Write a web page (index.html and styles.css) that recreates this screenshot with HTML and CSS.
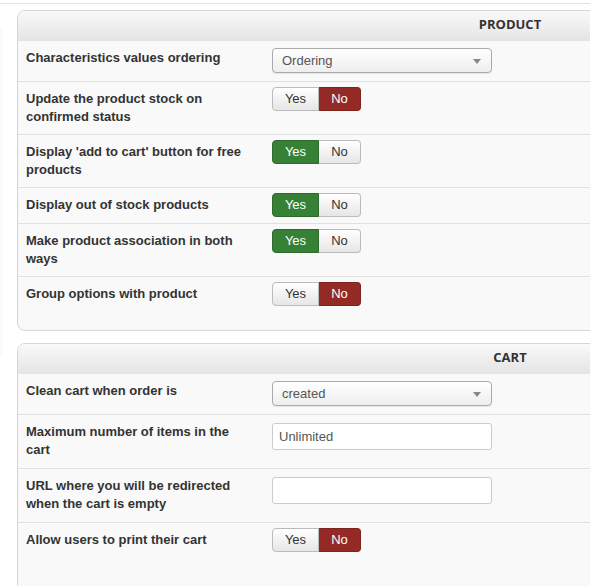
FILE: index.html
```html
<!DOCTYPE html>
<html lang="en">
<head>
    <meta charset="UTF-8">
    <meta name="viewport" content="width=device-width, initial-scale=1.0">
    <title>Shop configuration</title>
    <link rel="stylesheet" href="styles.css">
</head>
<body>
    <div class="topbar"></div>
    <div class="page">
        <div class="sidebar"></div>
        <div class="content">

            <!-- ---------------- Product settings ---------------- -->
            <div class="panel">
                <h3>PRODUCT</h3>
                <div class="row">
                    <div class="label">Characteristics values ordering</div>
                    <div class="field">
                        <div class="select">Ordering<span class="caret"></span></div>
                    </div>
                </div>
                <div class="row">
                    <div class="label">Update the product stock on confirmed status</div>
                    <div class="field">
                        <div class="toggle"><span class="yes">Yes</span><span class="no on-no">No</span></div>
                    </div>
                </div>
                <div class="row">
                    <div class="label">Display 'add to cart' button for free products</div>
                    <div class="field">
                        <div class="toggle"><span class="yes on-yes">Yes</span><span class="no">No</span></div>
                    </div>
                </div>
                <div class="row">
                    <div class="label">Display out of stock products</div>
                    <div class="field">
                        <div class="toggle"><span class="yes on-yes">Yes</span><span class="no">No</span></div>
                    </div>
                </div>
                <div class="row">
                    <div class="label">Make product association in both ways</div>
                    <div class="field">
                        <div class="toggle"><span class="yes on-yes">Yes</span><span class="no">No</span></div>
                    </div>
                </div>
                <div class="row">
                    <div class="label">Group options with product</div>
                    <div class="field">
                        <div class="toggle"><span class="yes">Yes</span><span class="no on-no">No</span></div>
                    </div>
                </div>
            </div>

            <!-- ---------------- Cart settings ---------------- -->
            <div class="panel panel-last">
                <h3>CART</h3>
                <div class="row">
                    <div class="label">Clean cart when order is</div>
                    <div class="field">
                        <div class="select">created<span class="caret"></span></div>
                    </div>
                </div>
                <div class="row">
                    <div class="label">Maximum number of items in the cart</div>
                    <div class="field">
                        <input type="text" class="text" value="Unlimited">
                    </div>
                </div>
                <div class="row">
                    <div class="label">URL where you will be redirected when the cart is empty</div>
                    <div class="field">
                        <input type="text" class="text" value="">
                    </div>
                </div>
                <div class="row">
                    <div class="label">Allow users to print their cart</div>
                    <div class="field">
                        <div class="toggle"><span class="yes">Yes</span><span class="no on-no">No</span></div>
                    </div>
                </div>
            </div>

        </div>
    </div>
</body>
</html>
```

FILE: styles.css
```css
body {
    margin: 0;
    background-color: #fff;
    font: 13px "Liberation Sans", Arial, sans-serif;
    color: #333;
    overflow: hidden;
}

.topbar {
    height: 3px;
    border-bottom: 1px solid #e2e2e2;
}

.page {
    display: flex;
    align-items: flex-start;
    padding-top: 6px;
}

.sidebar {
    flex: none;
    width: 200px;
    height: 328px;
    margin: 18px 19px 0 -202px;
    background-color: #fff;
    box-shadow: 0 0 6px rgba(0, 0, 0, .14);
}

.content {
    flex: none;
    width: 986px;
}

.panel {
    background-color: #f9f9f9;
    border: 1px solid #d6d6d6;
    border-radius: 8px;
    margin-bottom: 12px;
    padding-bottom: 18px;
    overflow: hidden;
}

.panel-last {
    padding-bottom: 60px;
}

.panel h3 {
    margin: 0;
    height: 26px;
    padding-top: 4px;
    line-height: 29px;
    text-align: center;
    font: bold 13px "Open Sans", "Liberation Sans", sans-serif;
    color: #333;
    background: linear-gradient(#f9f9f9, #e4e4e4);
}

.row {
    display: flex;
    border-top: 1px solid #e0e0e0;
}

.panel h3 + .row {
    border-top: none;
}

.label {
    flex: none;
    width: 228px;
    padding: 8px;
    font-weight: bold;
    line-height: 18px;
}

.field {
    padding: 5px 10px 6px;
}

.select {
    position: relative;
    box-sizing: border-box;
    width: 220px;
    height: 25px;
    margin: 2px 0;
    padding-left: 9px;
    line-height: 23px;
    color: #555;
    border: 1px solid #aaa;
    border-radius: 4px;
    background: linear-gradient(#fff, #eee);
    box-shadow: 0 1px 1px rgba(0, 0, 0, .08);
}

.caret {
    position: absolute;
    right: 10px;
    top: 10px;
    border-left: 4px solid transparent;
    border-right: 4px solid transparent;
    border-top: 5px solid #888;
}

.text {
    box-sizing: border-box;
    display: block;
    width: 220px;
    height: 27px;
    margin: 3px 0 12px;
    padding: 0 6px;
    font: 13px "Liberation Sans", Arial, sans-serif;
    color: #555;
    background-color: #fff;
    border: 1px solid #ccc;
    border-radius: 3px;
}

.toggle {
    display: flex;
}

.toggle span {
    box-sizing: border-box;
    height: 24px;
    line-height: 22px;
    text-align: center;
    color: #333;
    border: 1px solid #bbb;
    background: linear-gradient(#fff, #e6e6e6);
}

.toggle .yes {
    width: 47px;
    border-radius: 4px 0 0 4px;
}

.toggle .no {
    width: 42px;
    border-left: none;
    border-radius: 0 4px 4px 0;
}

.toggle .on-yes {
    color: #fff;
    background: #378137;
    border-color: #2c6b2c;
}

.toggle .on-no {
    color: #fff;
    background: #942a25;
    border-color: #7f231f;
}
```
